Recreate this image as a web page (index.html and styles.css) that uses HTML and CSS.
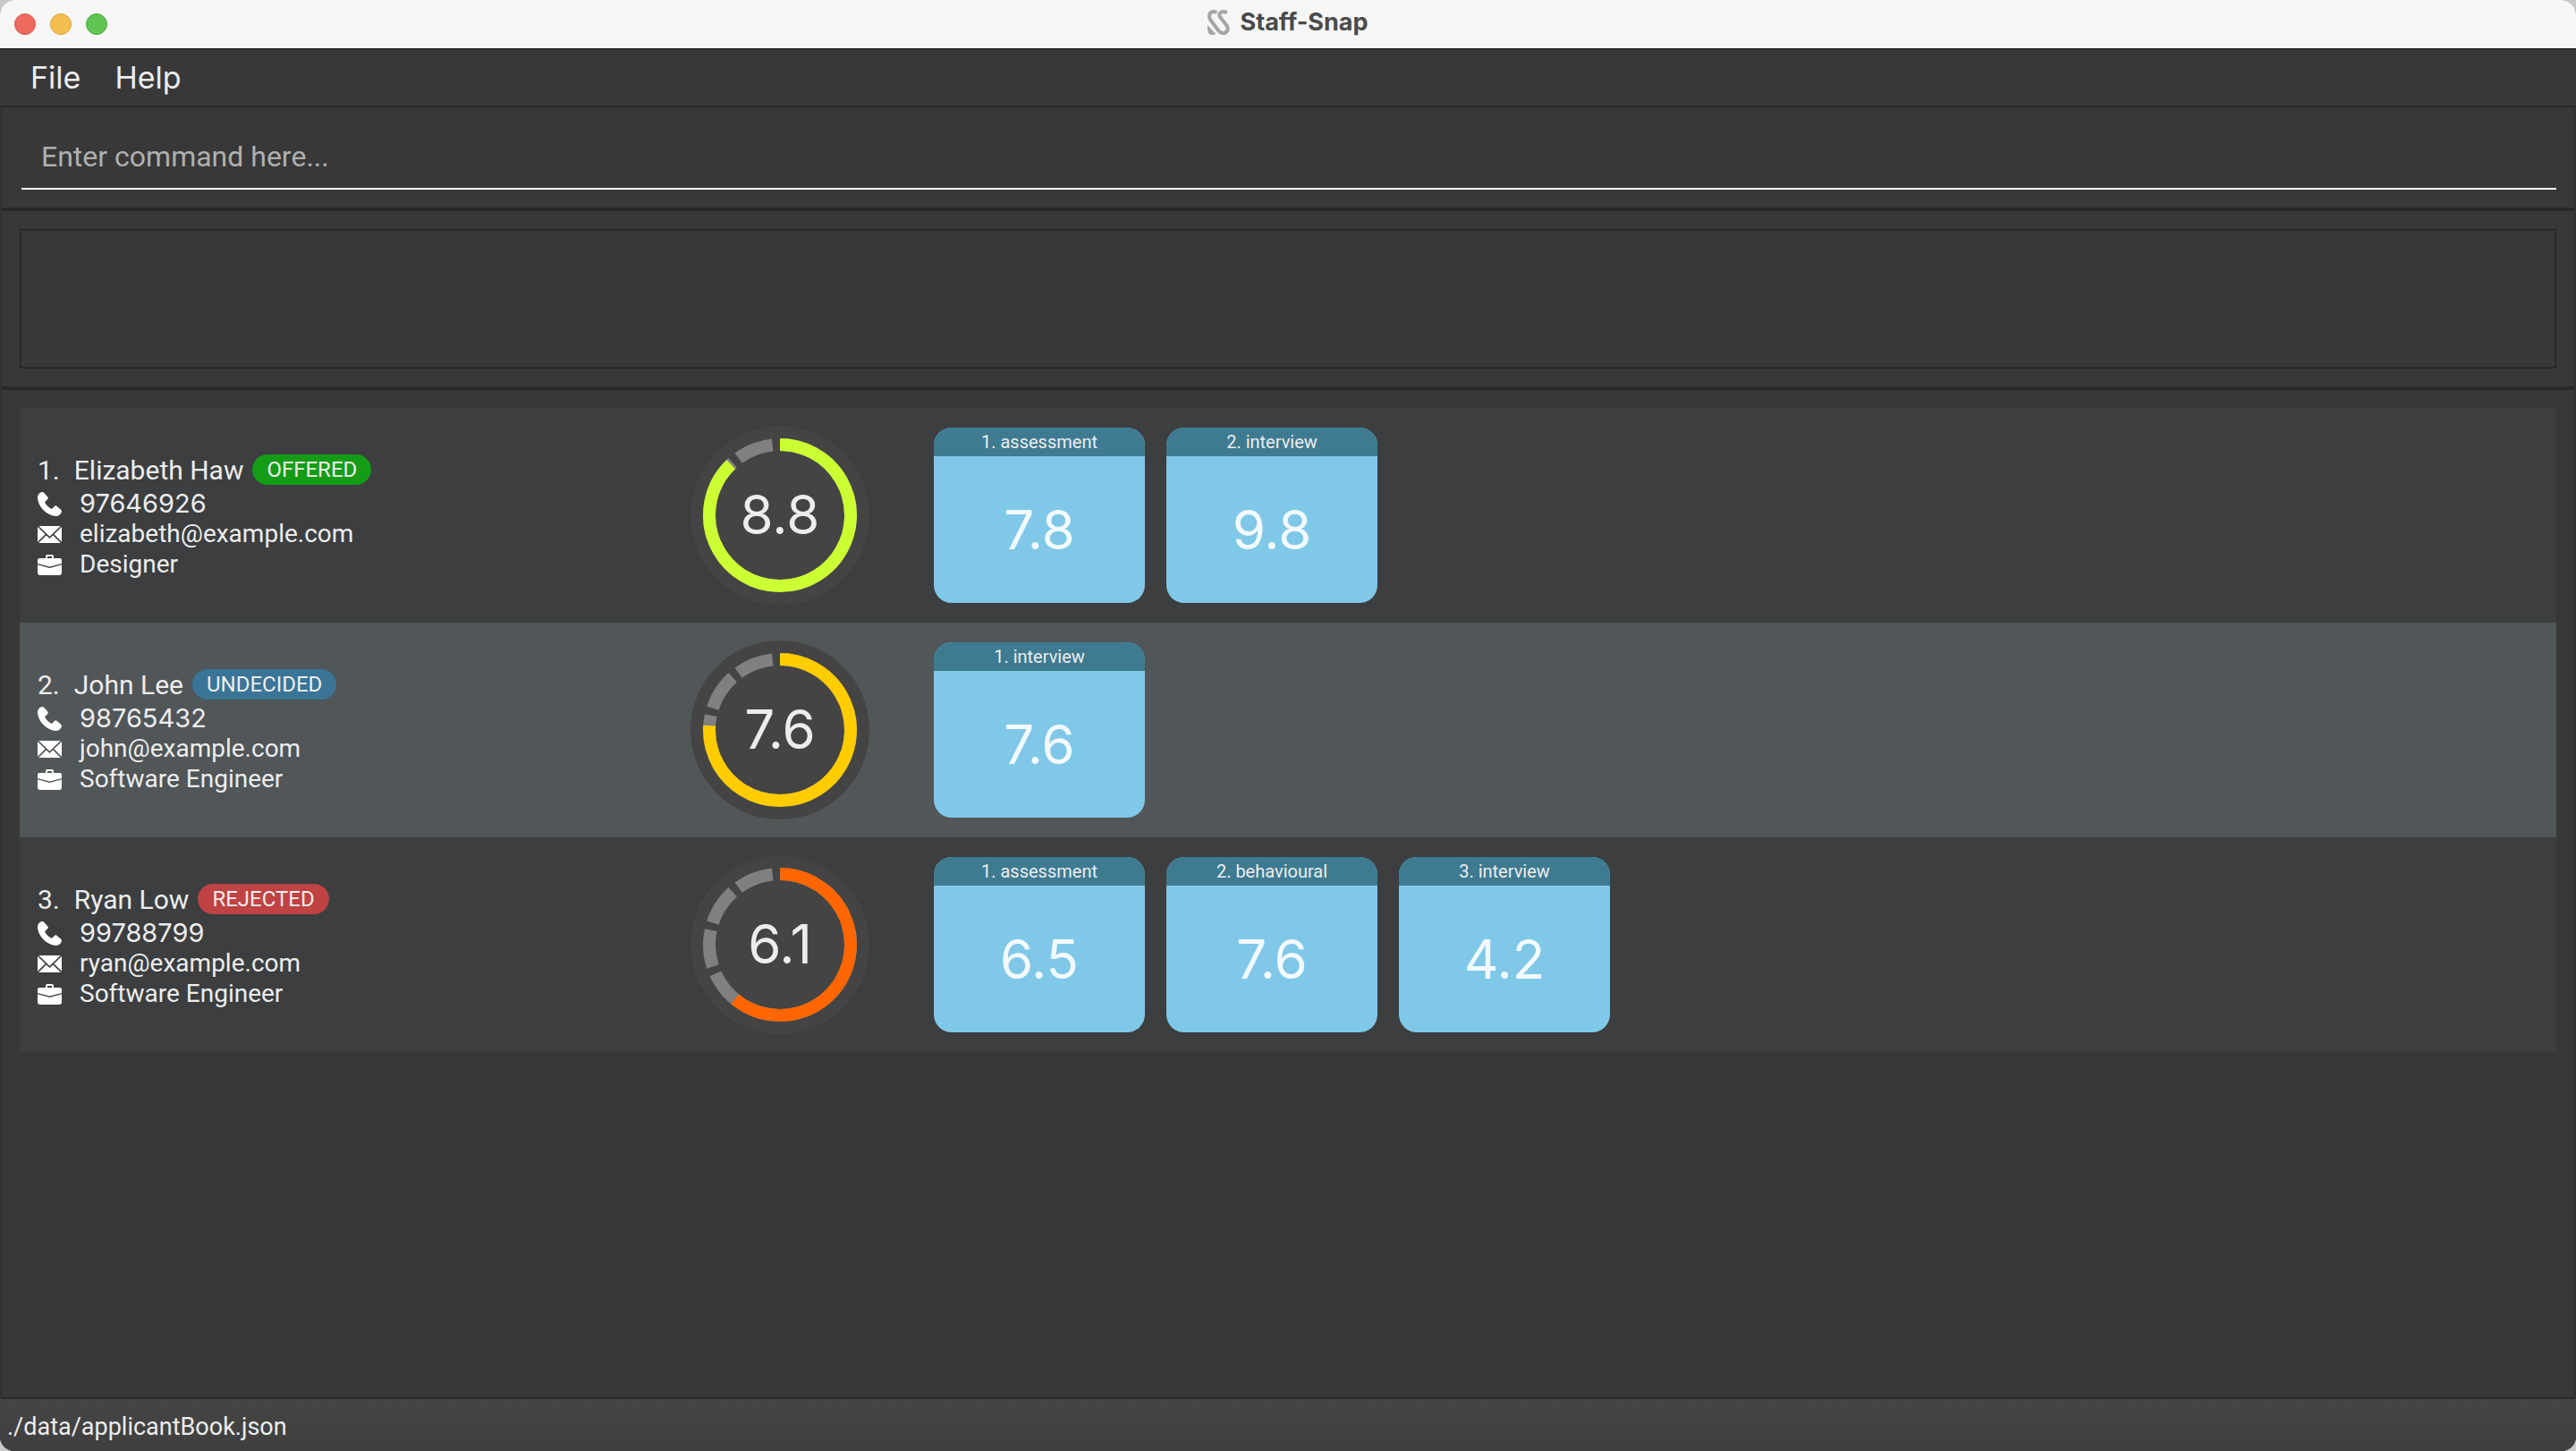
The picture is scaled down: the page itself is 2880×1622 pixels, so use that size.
FILE: index.html
```html
<!DOCTYPE html>
<html lang="en">
<head>
<meta charset="utf-8">
<title>Staff-Snap</title>
<link rel="stylesheet" href="styles.css">
</head>
<body>
<svg class="sprite" aria-hidden="true">
  <symbol id="i-phone" viewBox="0 0 27 27"><path d="M0 6C0 3.400 2.500 .4 5 .1C6 0 6.600 .3 7.300 1.100L11.300 5.600C12 6.600 11.900 7.300 11.200 8.100L8.600 10.700C8.200 11.200 8.200 11.800 8.500 12.300C10.100 15 12.200 17 14.900 18.600C15.500 18.900 16 18.800 16.400 18.400L18.900 16C19.700 15.200 20.500 15.100 21.400 15.800L25.900 19.600C26.800 20.400 27.100 21.200 26.800 22.300C26.200 24.700 23.600 27 21.200 27C10.500 26.600 .4 16.500 0 6Z"/></symbol>
  <symbol id="i-mail" viewBox="0 0 27 19"><path d="M1.300 0H25.700L13.500 11.800ZM0 1L8.600 9.300L0 17.800ZM27 1V17.800L18.400 9.300ZM9.700 10.400L13.500 14L17.300 10.400L25.900 19H1.100Z"/></symbol>
  <symbol id="i-case" viewBox="0 0 27 23"><path fill-rule="evenodd" d="M9 4V2Q9 0 11 0H16Q18 0 18 2V4H25Q27 4 27 6V10L14.500 13.300Q13.500 13.600 12.500 13.300L0 10V6Q0 4 2 4ZM11 4H16V2H11ZM0 11.300L12.500 14.800Q13.500 15 14.500 14.800L27 11.300V20Q27 23 24 23H3Q0 23 0 20Z"/></symbol>
</svg>
<div class="window">
  <header class="titlebar">
    <div class="lights">
      <button class="light close" aria-label="Close"></button>
      <button class="light minimise" aria-label="Minimise"></button>
      <button class="light zoom" aria-label="Zoom"></button>
    </div>
    <h1 class="title">
      <svg class="logo" viewBox="0 0 25 28" aria-hidden="true"><path fill="none" stroke="#a5a5a5" stroke-width="4" d="M10.500 3C7 1 2 2 2 7C2 9 2.500 10 3.500 11.500L12.500 23.500C15 27 21 27 22.500 22.500C23 20.500 22.500 19 21.500 17.500L14.500 8.500C11.500 4.500 15 1.800 18 2L22 3"/><path fill="#a5a5a5" d="M0 17L9.500 27Q7 28 5 28Q0 27.500 0 22Z"/></svg>
      Staff-Snap
    </h1>
  </header>
  <nav class="menubar">
    <button class="menu">File</button>
    <button class="menu">Help</button>
  </nav>
  <main class="content">
    <section class="pane">
      <input class="command" type="text" placeholder="Enter command here..." aria-label="Command">
    </section>
    <section class="pane">
      <textarea class="result" readonly aria-label="Result"></textarea>
    </section>
    <ul class="pane applicants">
      <li class="applicant">
        <div class="details">
          <h2 class="heading"><span>1.</span><span class="name">Elizabeth Haw</span><span class="tag offered">OFFERED</span></h2>
          <p class="line phone"><svg class="icon"><use href="#i-phone"/></svg>97646926</p>
          <p class="line"><svg class="icon"><use href="#i-mail"/></svg>elizabeth@example.com</p>
          <p class="line"><svg class="icon"><use href="#i-case"/></svg>Designer</p>
        </div>
        <svg class="gauge" viewBox="0 0 200 200" role="img" aria-label="Overall rating">
          <circle class="face" cx="100" cy="100" r="100"/>
          <path class="track" pathLength="360" d="M100 21A79 79 0 1 1 99.990 21"/>
          <path class="fill good" pathLength="100" stroke-dasharray="87.800 100" d="M100 21A79 79 0 1 1 99.990 21"/>
          <text class="reading" x="100" y="121">8.8</text>
        </svg>
        <div class="interviews">
          <article class="card"><h3 class="kind">1. assessment</h3><p class="score">7.8</p></article>
          <article class="card"><h3 class="kind">2. interview</h3><p class="score">9.8</p></article>
        </div>
      </li>
      <li class="applicant">
        <div class="details">
          <h2 class="heading"><span>2.</span><span class="name">John Lee</span><span class="tag undecided">UNDECIDED</span></h2>
          <p class="line phone"><svg class="icon"><use href="#i-phone"/></svg>98765432</p>
          <p class="line"><svg class="icon"><use href="#i-mail"/></svg>john@example.com</p>
          <p class="line"><svg class="icon"><use href="#i-case"/></svg>Software Engineer</p>
        </div>
        <svg class="gauge" viewBox="0 0 200 200" role="img" aria-label="Overall rating">
          <circle class="face" cx="100" cy="100" r="100"/>
          <path class="track" pathLength="360" d="M100 21A79 79 0 1 1 99.990 21"/>
          <path class="fill fair" pathLength="100" stroke-dasharray="76 100" d="M100 21A79 79 0 1 1 99.990 21"/>
          <text class="reading" x="100" y="121">7.6</text>
        </svg>
        <div class="interviews">
          <article class="card"><h3 class="kind">1. interview</h3><p class="score">7.6</p></article>
        </div>
      </li>
      <li class="applicant">
        <div class="details">
          <h2 class="heading"><span>3.</span><span class="name">Ryan Low</span><span class="tag rejected">REJECTED</span></h2>
          <p class="line phone"><svg class="icon"><use href="#i-phone"/></svg>99788799</p>
          <p class="line"><svg class="icon"><use href="#i-mail"/></svg>ryan@example.com</p>
          <p class="line"><svg class="icon"><use href="#i-case"/></svg>Software Engineer</p>
        </div>
        <svg class="gauge" viewBox="0 0 200 200" role="img" aria-label="Overall rating">
          <circle class="face" cx="100" cy="100" r="100"/>
          <path class="track" pathLength="360" d="M100 21A79 79 0 1 1 99.990 21"/>
          <path class="fill poor" pathLength="100" stroke-dasharray="61 100" d="M100 21A79 79 0 1 1 99.990 21"/>
          <text class="reading" x="100" y="121">6.1</text>
        </svg>
        <div class="interviews">
          <article class="card"><h3 class="kind">1. assessment</h3><p class="score">6.5</p></article>
          <article class="card"><h3 class="kind">2. behavioural</h3><p class="score">7.6</p></article>
          <article class="card"><h3 class="kind">3. interview</h3><p class="score">4.2</p></article>
        </div>
      </li>
    </ul>
  </main>
  <footer class="status">./data/applicantBook.json</footer>
</div>
</body>
</html>
```
FILE: styles.css
```css
* { box-sizing: border-box; margin: 0; padding: 0; }

body {
  background: #c9c9c9;
  color: #ededed;
  font-family: Roboto, "Liberation Sans", sans-serif;
  font-size: 28px;
}

button, input, textarea { border: 0; background: none; color: inherit; font: inherit; outline: 0; }
h1, h2, h3 { font-weight: 400; }
.sprite { display: none; }

.window {
  display: flex;
  flex-direction: column;
  min-height: 100vh;
  border-radius: 16px;
  background: #383838;
  overflow: hidden;
}

/* Title bar */
.titlebar {
  display: grid;
  grid-template-columns: 1fr auto 1fr;
  align-items: center;
  height: 55px;
  padding: 0 16px;
  background: #f6f6f5;
  border-bottom: 1px solid #101010;
}
.lights { display: flex; gap: 16px; }
.light { width: 24px; height: 24px; border-radius: 50%; border: 1px solid; }
.close { background: #ed6a5e; border-color: #d85549; }
.minimise { background: #f5bf4f; border-color: #d8a13c; }
.zoom { background: #61c554; border-color: #4fa73f; }
.title {
  display: flex;
  align-items: center;
  gap: 11px;
  color: #4a4a4a;
  font: 700 27px/50px Inter, sans-serif;
  padding-bottom: 4px;
}
.logo { width: 25px; height: 28px; }

/* Menu bar */
.menubar { display: flex; gap: 6px; height: 63px; padding: 0 18px; }
.menu { padding: 0 16px; font: 34px/60px Inter, sans-serif; }

/* Stacked panes */
.content {
  flex: 1;
  display: flex;
  flex-direction: column;
  margin: 0 1px;
  border: 1px solid #292929;
  border-width: 2px 1px;
}
.pane { padding: 20px; border-bottom: 4px solid #292929; }
.command {
  display: block;
  width: calc(100% - 2px);
  height: 72px;
  margin-left: 2px;
  padding: 0 22px;
  border-bottom: 2px solid #fff;
  font-size: 32px;
}
.command::placeholder { color: #b0b0b0; opacity: 1; }
.result {
  display: block;
  width: 100%;
  height: 156px;
  border: 2px solid #292929;
  resize: none;
}

/* Applicant list */
.applicants { flex: 1; list-style: none; border-bottom: 0; }
.applicant {
  display: grid;
  grid-template-columns: 658px 200px 1fr;
  column-gap: 72px;
  height: 240px;
  padding: 20px;
  background: #3c3e3f;
}
.applicant:nth-child(even) { background: #515658; }
.details { padding-top: 32px; }
.heading { display: flex; align-items: flex-start; font-size: 30px; line-height: 36px; }
.heading + .line { margin-top: 2px; }
.name { margin: 0 10px 0 16px; }
.tag { height: 34px; padding: 0 16px; border-radius: 17px; font-size: 24px; line-height: 34px; }
.offered { background: #149c17; }
.undecided { background: #3a7496; }
.rejected { background: #be4342; }
.line { display: flex; align-items: center; gap: 20px; line-height: 34px; }
.phone { font: 29px/34px Inter, sans-serif; }
.icon { width: 27px; height: 27px; fill: #fff; }

/* Rating dial */
.gauge { width: 200px; height: 200px; }
.face { fill: #444; }
.track, .fill { fill: none; stroke-width: 14px; }
.track { stroke: #808080; stroke-dasharray: 30 6; }
.good { stroke: #cf3; }
.fair { stroke: #fc0; }
.poor { stroke: #f60; }
.reading { fill: #ededed; font: 60px Inter, sans-serif; text-anchor: middle; }

/* Interview cards */
.interviews { display: flex; gap: 24px; padding-top: 2px; }
.card {
  width: 236px;
  height: 196px;
  border-radius: 20px;
  background: #7fc8e8;
  overflow: hidden;
  text-align: center;
}
.kind { background: #3e7b91; font-size: 20px; line-height: 32px; }
.score { color: #f3fafd; font: 60px/164px Inter, sans-serif; }

/* Status bar */
.status {
  height: 58px;
  padding: 0 8px;
  background: linear-gradient(#454545, #3f3f3f);
  font-size: 27px;
  line-height: 62px;
}
```
